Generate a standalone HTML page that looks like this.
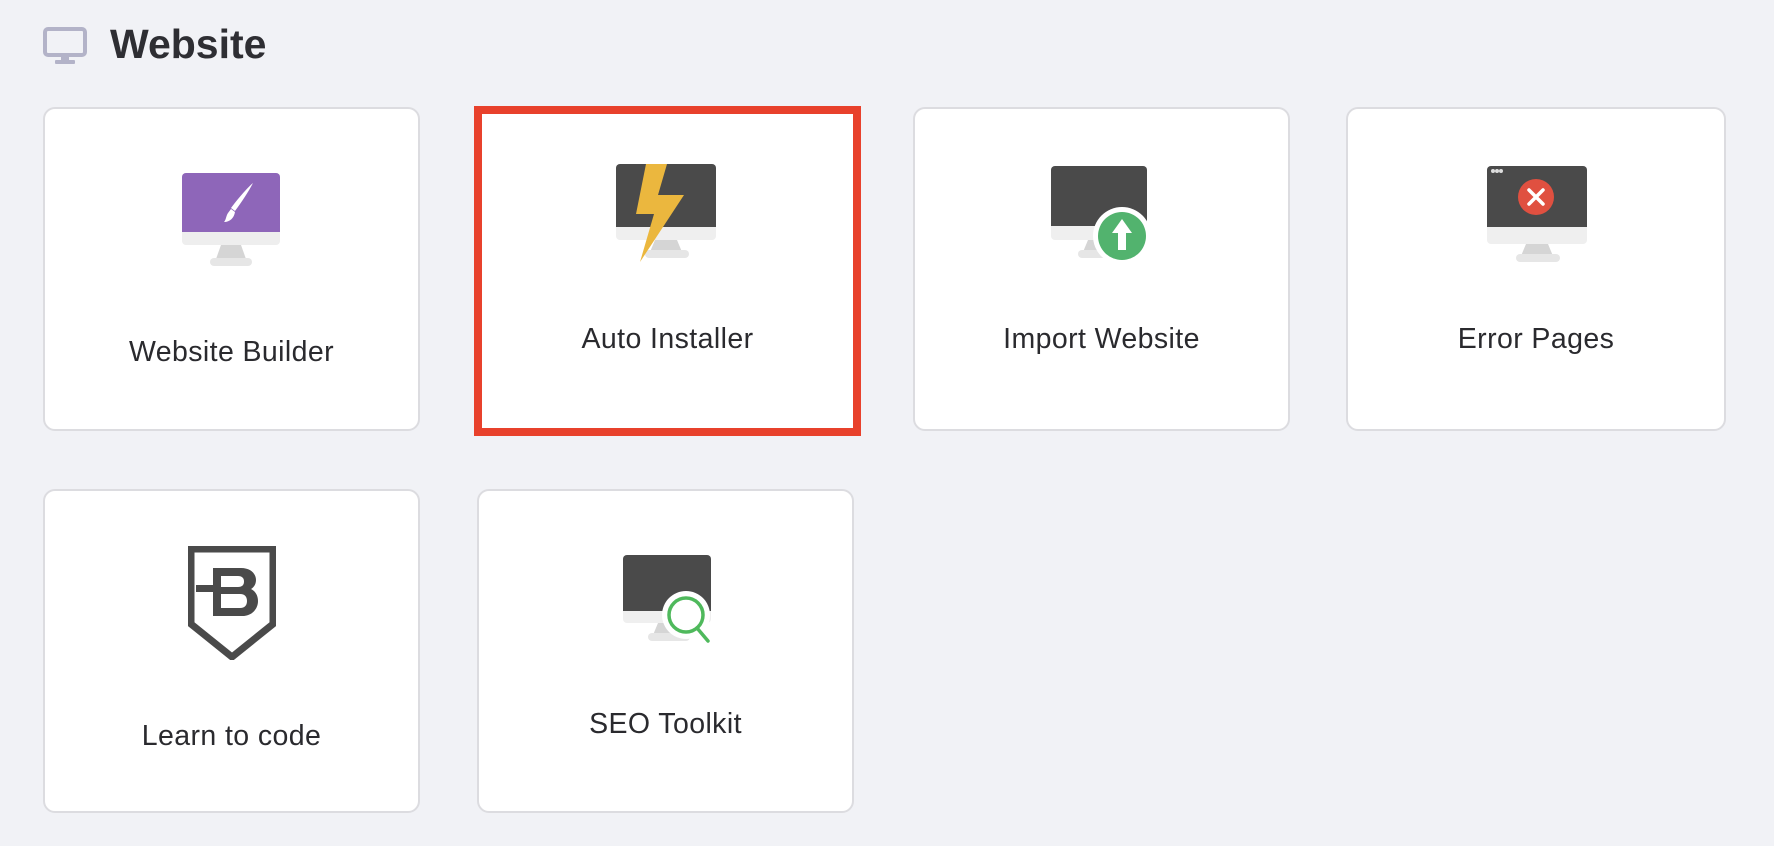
<!DOCTYPE html>
<html><head><meta charset="utf-8"><style>
*{margin:0;padding:0;box-sizing:border-box}
body{width:1774px;height:846px;background:#f1f2f6;font-family:"Liberation Sans",sans-serif;position:relative;overflow:hidden}
.card{position:absolute;background:#fff;border:2px solid #dcdce0;border-radius:12px;width:377px;height:324px}
.lbl{position:absolute;left:0;right:0;text-align:center;font-size:28.5px;color:#2a2a2e;letter-spacing:0.4px}
svg{position:absolute}
.red{position:absolute;left:474px;top:106px;width:387px;height:330px;border:8px solid #e8412c}
</style></head><body>
<svg style="left:43px;top:27px" width="44" height="38" viewBox="0 0 44 38"><rect x="2" y="2" width="40" height="26" rx="3" fill="none" stroke="#b3b3c8" stroke-width="4"/><rect x="18" y="28" width="8" height="5" fill="#b3b3c8"/><rect x="12" y="33" width="20" height="4" rx="1" fill="#b3b3c8"/></svg>
<div style="position:absolute;left:110px;top:21px;font-size:41px;font-weight:bold;color:#2e2e33">Website</div>

<div class="card" style="left:43px;top:107px">
<svg style="left:136px;top:62px" width="100" height="98" viewBox="0 0 100 98"><rect x="1" y="2" width="98" height="72" rx="4" fill="#eeeeee"/><path d="M5 2h90a4 4 0 0 1 4 4v55H1V6a4 4 0 0 1 4-4z" fill="#8e66b9"/><path d="M40 74h20l5 14H35z" fill="#d5d5d5"/><rect x="29" y="87" width="42" height="8" rx="4" fill="#e6e6e6"/><path d="M72 12c-4 8-12 20-18 28l-4-3c6-8 16-20 22-25zM50 38l4 3c-1 6-5 10-11 10 2-2 2-6 4-9z" fill="#fff"/></svg>
<div class="lbl" style="top:227px">Website Builder</div></div>

<div class="card" style="left:482px;top:114px;width:371px;height:314px;border:none;border-radius:0">
<svg style="left:133px;top:50px" width="102" height="98" viewBox="0 0 102 98"><rect x="1" y="0" width="100" height="76" rx="4" fill="#efefef"/><path d="M5 0h92a4 4 0 0 1 4 4v59H1V4a4 4 0 0 1 4-4z" fill="#4a4a4a"/><path d="M40 76h22l5 12H35z" fill="#d5d5d5"/><rect x="30" y="86" width="44" height="8" rx="4" fill="#e6e6e6"/><path d="M31 0h21l-9 31h26L25 98l14-48H21z" fill="#ebb73e"/></svg>
<div class="lbl" style="top:209px">Auto Installer</div></div>
<div class="red"></div>

<div class="card" style="left:913px;top:107px">
<svg style="left:135px;top:55px" width="105" height="98" viewBox="0 0 105 98"><rect x="1" y="2" width="96" height="74" rx="4" fill="#efefef"/><path d="M5 2h88a4 4 0 0 1 4 4v56H1V6a4 4 0 0 1 4-4z" fill="#4a4a4a"/><path d="M38 76h22l5 12H33z" fill="#d5d5d5"/><rect x="28" y="86" width="44" height="8" rx="4" fill="#e6e6e6"/><circle cx="72" cy="72" r="29" fill="#fff"/><circle cx="72" cy="72" r="24" fill="#52b36e"/><path d="M72 55l-10 14h6v17h8V69h6z" fill="#fff"/></svg>
<div class="lbl" style="top:214px">Import Website</div></div>

<div class="card" style="left:1346px;top:107px;width:380px">
<svg style="left:138px;top:55px" width="102" height="100" viewBox="0 0 102 100"><rect x="1" y="2" width="100" height="78" rx="4" fill="#efefef"/><path d="M5 2h92a4 4 0 0 1 4 4v57H1V6a4 4 0 0 1 4-4z" fill="#4a4a4a"/><circle cx="7" cy="7" r="2" fill="#ddd"/><circle cx="11" cy="7" r="2" fill="#ddd"/><circle cx="15" cy="7" r="2" fill="#ddd"/><circle cx="50" cy="33" r="18" fill="#e05040"/><path d="M43 26l14 14M57 26L43 40" stroke="#fff" stroke-width="3.5" stroke-linecap="round"/><path d="M40 80h22l5 12H35z" fill="#d5d5d5"/><rect x="30" y="90" width="44" height="8" rx="4" fill="#e6e6e6"/></svg>
<div class="lbl" style="top:214px">Error Pages</div></div>

<div class="card" style="left:43px;top:489px">
<svg style="left:143px;top:55px" width="88" height="114" viewBox="0 0 88 114"><path d="M3 3h82v75L44 111 3 78z" fill="none" stroke="#4a4a4a" stroke-width="7"/><path d="M25 22h28c10 0 15 6 15 12 0 5-3 8-5 9 4 2 7 6 7 12 0 8-6 15-16 15H25V46H8v-7h17z" fill="#4a4a4a"/><path d="M33 30v11h17c4 0 6-2 6-5.5S54 30 50 30zM33 48v14h19c5 0 7-3 7-7s-2-7-7-7z" fill="#fff"/></svg>
<div class="lbl" style="top:229px">Learn to code</div></div>

<div class="card" style="left:477px;top:489px">
<svg style="left:143px;top:62px" width="94" height="92" viewBox="0 0 94 92"><rect x="1" y="2" width="88" height="68" rx="4" fill="#efefef"/><path d="M5 2h80a4 4 0 0 1 4 4v52H1V6a4 4 0 0 1 4-4z" fill="#4a4a4a"/><path d="M36 70h20l5 12H31z" fill="#d5d5d5"/><rect x="26" y="80" width="42" height="8" rx="4" fill="#e6e6e6"/><circle cx="64" cy="62" r="24" fill="#fff"/><circle cx="64" cy="62" r="17" fill="#fff" stroke="#4fb95c" stroke-width="3.5"/><path d="M75 75l11 13" stroke="#4fb95c" stroke-width="3.5" stroke-linecap="round"/></svg>
<div class="lbl" style="top:217px">SEO Toolkit</div></div>
</body></html>
